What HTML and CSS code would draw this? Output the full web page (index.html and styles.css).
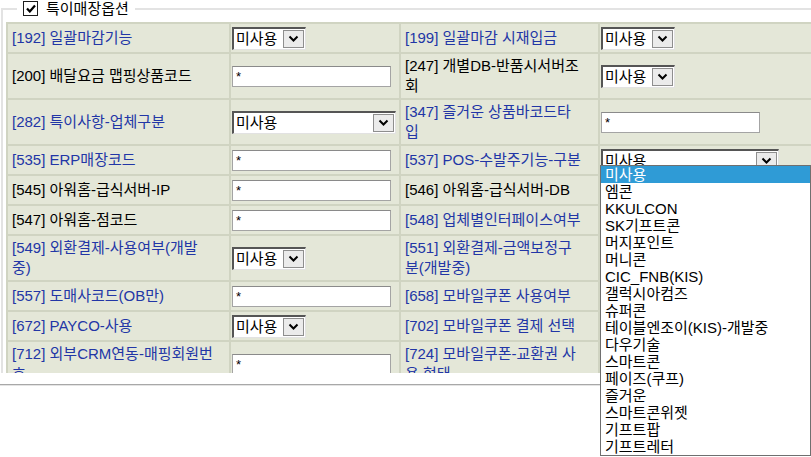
FILE: index.html
```html
<!DOCTYPE html>
<html lang="ko">
<head>
    <meta charset="UTF-8">
    <title>특이매장옵션</title>
    <link rel="stylesheet" href="styles.css">
</head>
<body>
<div class="page">
    <div class="opt-box">
        <fieldset class="opt-set">
            <legend class="opt-legend">
                <span class="chk"><svg width="10" height="9" viewBox="0 0 10 9"><polyline points="1,4.5 3.8,7.5 9,1.5"/></svg></span>
                특이매장옵션
            </legend>
            <table class="opt-table">
                <colgroup>
                    <col class="c-lbl1"><col class="c-val1"><col class="c-lbl2"><col class="c-val2">
                </colgroup>
                <tr>
                    <td class="lbl blue">[192] 일괄마감기능</td>
                    <td class="val"><div class="combo"><span class="combo-text">미사용</span><span class="combo-btn"><svg width="11" height="7" viewBox="0 0 11 7"><polyline points="1.5,1.5 5.5,5.5 9.5,1.5"/></svg></span></div></td>
                    <td class="lbl blue">[199] 일괄마감 시재입금</td>
                    <td class="val"><div class="combo"><span class="combo-text">미사용</span><span class="combo-btn"><svg width="11" height="7" viewBox="0 0 11 7"><polyline points="1.5,1.5 5.5,5.5 9.5,1.5"/></svg></span></div></td>
                </tr>
                <tr>
                    <td class="lbl">[200] 배달요금 맵핑상품코드</td>
                    <td class="val"><input class="txt" type="text" value="*"></td>
                    <td class="lbl">[247] 개별DB-반품시서버조<br>회</td>
                    <td class="val"><div class="combo"><span class="combo-text">미사용</span><span class="combo-btn"><svg width="11" height="7" viewBox="0 0 11 7"><polyline points="1.5,1.5 5.5,5.5 9.5,1.5"/></svg></span></div></td>
                </tr>
                <tr>
                    <td class="lbl blue">[282] 특이사항-업체구분</td>
                    <td class="val"><div class="combo wide"><span class="combo-text">미사용</span><span class="combo-btn"><svg width="11" height="7" viewBox="0 0 11 7"><polyline points="1.5,1.5 5.5,5.5 9.5,1.5"/></svg></span></div></td>
                    <td class="lbl blue">[347] 즐거운 상품바코드타<br>입</td>
                    <td class="val"><input class="txt" type="text" value="*"></td>
                </tr>
                <tr>
                    <td class="lbl blue">[535] ERP매장코드</td>
                    <td class="val"><input class="txt" type="text" value="*"></td>
                    <td class="lbl blue">[537] POS-수발주기능-구분</td>
                    <td class="val"><div class="combo wider"><span class="combo-text">미사용</span><span class="combo-btn"><svg width="11" height="7" viewBox="0 0 11 7"><polyline points="1.5,1.5 5.5,5.5 9.5,1.5"/></svg></span></div></td>
                </tr>
                <tr>
                    <td class="lbl">[545] 아워홈-급식서버-IP</td>
                    <td class="val"><input class="txt" type="text" value="*"></td>
                    <td class="lbl">[546] 아워홈-급식서버-DB</td>
                    <td class="val"></td>
                </tr>
                <tr>
                    <td class="lbl">[547] 아워홈-점코드</td>
                    <td class="val"><input class="txt" type="text" value="*"></td>
                    <td class="lbl blue">[548] 업체별인터페이스여부</td>
                    <td class="val"></td>
                </tr>
                <tr>
                    <td class="lbl blue">[549] 외환결제-사용여부(개발<br>중)</td>
                    <td class="val"><div class="combo"><span class="combo-text">미사용</span><span class="combo-btn"><svg width="11" height="7" viewBox="0 0 11 7"><polyline points="1.5,1.5 5.5,5.5 9.5,1.5"/></svg></span></div></td>
                    <td class="lbl blue">[551] 외환결제-금액보정구<br>분(개발중)</td>
                    <td class="val"></td>
                </tr>
                <tr>
                    <td class="lbl blue">[557] 도매사코드(OB만)</td>
                    <td class="val"><input class="txt" type="text" value="*"></td>
                    <td class="lbl blue">[658] 모바일쿠폰 사용여부</td>
                    <td class="val"></td>
                </tr>
                <tr>
                    <td class="lbl blue">[672] PAYCO-사용</td>
                    <td class="val"><div class="combo"><span class="combo-text">미사용</span><span class="combo-btn"><svg width="11" height="7" viewBox="0 0 11 7"><polyline points="1.5,1.5 5.5,5.5 9.5,1.5"/></svg></span></div></td>
                    <td class="lbl blue">[702] 모바일쿠폰 결제 선택</td>
                    <td class="val"></td>
                </tr>
                <tr>
                    <td class="lbl blue">[712] 외부CRM연동-매핑회원번<br>호</td>
                    <td class="val"><input class="txt" type="text" value="*"></td>
                    <td class="lbl blue">[724] 모바일쿠폰-교환권 사<br>용 형태</td>
                    <td class="val"></td>
                </tr>
            </table>
        </fieldset>
    </div>
    <div class="page-rule"></div>

    <!-- open list of [537] select -->
    <ul class="combo-list">
        <li class="on">미사용</li>
        <li>엠콘</li>
        <li>KKULCON</li>
        <li>SK기프트콘</li>
        <li>머지포인트</li>
        <li>머니콘</li>
        <li>CIC_FNB(KIS)</li>
        <li>갤럭시아컴즈</li>
        <li>슈퍼콘</li>
        <li>테이블엔조이(KIS)-개발중</li>
        <li>다우기술</li>
        <li>스마트콘</li>
        <li>페이즈(쿠프)</li>
        <li>즐거운</li>
        <li>스마트콘위젯</li>
        <li>기프트팝</li>
        <li>기프트레터</li>
    </ul>
</div>
</body>
</html>
```

FILE: styles.css
```css
html, body {
    margin: 0;
    padding: 0;
    background: #fff;
    overflow: hidden;
}

body {
    font-family: "Liberation Sans", "Noto Sans CJK KR", sans-serif;
    font-size: 15px;
    color: #000;
}

.page {
    position: relative;
    width: 811px;
    height: 457px;
}

.opt-box {
    height: 373px;
    overflow: hidden;
}

.opt-set {
    margin: 0 0 0 1px;
    padding: 5px 0 0 3px;
    width: 900px;
    min-width: 0;
    border: 2px solid #e3e3e3;
    border-right: none;
    border-bottom: none;
}

.opt-legend {
    margin-left: 11px;
    padding: 0 6px;
    display: flex;
    align-items: center;
    gap: 8px;
    height: 17px;
    line-height: 17px;
}

.chk {
    width: 15px;
    height: 15px;
    box-sizing: border-box;
    border: 1px solid #1c1c1c;
    background: #fff;
    display: flex;
    align-items: center;
    justify-content: center;
}

.chk polyline {
    fill: none;
    stroke: #000;
    stroke-width: 2.2;
}

.opt-table {
    border-collapse: collapse;
    table-layout: fixed;
    width: 832px;
    background: #e4e7d8;
}

.c-lbl1 { width: 223px; }
.c-val1 { width: 170px; }
.c-lbl2 { width: 199px; }
.c-val2 { width: 240px; }

.opt-table td {
    border: 2px solid #d0d4c2;
    height: 24px;
    padding: 2px 4px;
    line-height: 20px;
    vertical-align: middle;
    white-space: nowrap;
}

.opt-table td.val {
    padding: 2px 1px;
}

.lbl.blue {
    color: #2236a6;
}

.combo {
    display: flex;
    align-items: center;
    width: 74px;
    height: 23px;
    box-sizing: border-box;
    border-top: 2px solid #555;
    border-left: 2px solid #555;
    border-right: 1px solid #e2e2e2;
    border-bottom: 1px solid #e2e2e2;
    background: #fff;
}

.combo.wide { width: 164px; }
.combo.wider { width: 178px; }

.combo-text {
    flex: 1;
    padding-left: 2px;
    line-height: 18px;
}

.combo-btn {
    width: 21px;
    height: 18px;
    box-sizing: border-box;
    margin-right: 1px;
    border: 1px solid #8e8e8e;
    background: #ebebeb;
    display: flex;
    align-items: center;
    justify-content: center;
}

.combo-btn polyline {
    fill: none;
    stroke: #000;
    stroke-width: 2;
}

.txt {
    width: 159px;
    height: 21px;
    box-sizing: border-box;
    margin: 0;
    padding: 0 3px;
    border: 1px solid #a4a4a4;
    border-top-color: #8a8a8a;
    background: #fff;
    font-family: "Liberation Sans", sans-serif;
    font-size: 13px;
    color: #000;
    outline: none;
}

.page-rule {
    margin-top: 11px;
    border-top: 1px solid #a8a8a8;
    border-bottom: 1px solid #e4e4e4;
}

.combo-list {
    position: absolute;
    left: 600px;
    top: 165px;
    width: 211px;
    margin: 0;
    padding: 0;
    list-style: none;
    box-sizing: border-box;
    border: 1px solid #6f6f6f;
    background: #fff;
}

.combo-list li {
    height: 17px;
    line-height: 17px;
    padding-left: 4px;
    white-space: nowrap;
}

.combo-list li.on {
    background: #2f9bd6;
    color: #fff;
}
```
